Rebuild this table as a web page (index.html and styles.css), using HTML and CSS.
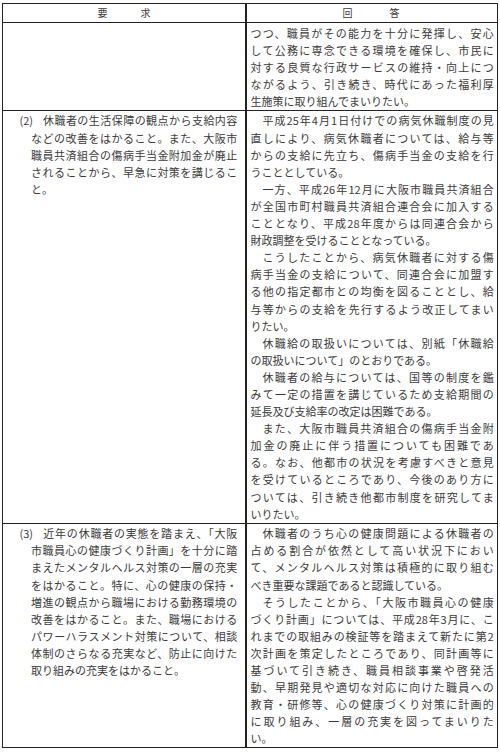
FILE: index.html
```html
<!DOCTYPE html>
<html lang="ja">
<head>
<meta charset="utf-8">
<title>要求と回答</title>
<link rel="stylesheet" href="styles.css">
</head>
<body>
<div class="sheet">
  <div class="row head">
    <div class="cell hl"><span>要</span><span>求</span></div>
    <div class="cell hr"><span>回</span><span>答</span></div>
  </div>

  <div class="row">
    <div class="cell req"></div>
    <div class="cell ans">
      <p class="para">
        <span class="l">つつ、職員がその能力を十分に発揮し、安心</span>
        <span class="l">して公務に専念できる環境を確保し、市民に</span>
        <span class="l">対する良質な行政サービスの維持・向上につ</span>
        <span class="l">ながるよう、引き続き、時代にあった福利厚</span>
        <span class="l e">生施策に取り組んでまいりたい。</span>
      </p>
    </div>
  </div>

  <div class="row">
    <div class="cell req">
      <p class="para">
        <span class="l f"><span class="n">(2)</span>休職者の生活保障の観点から支給内容</span>
        <span class="l">などの改善をはかること。また、大阪市</span>
        <span class="l">職員共済組合の傷病手当金附加金が廃止</span>
        <span class="l">されることから、早急に対策を講じるこ</span>
        <span class="l e">と。</span>
      </p>
    </div>
    <div class="cell ans">
      <p class="para">
        <span class="l i">平成25年4月1日付けでの病気休職制度の見</span>
        <span class="l">直しにより、病気休職者については、給与等</span>
        <span class="l">からの支給に先立ち、傷病手当金の支給を行</span>
        <span class="l e">うこととしている。</span>
      </p>
      <p class="para">
        <span class="l i">一方、平成26年12月に大阪市職員共済組合</span>
        <span class="l">が全国市町村職員共済組合連合会に加入する</span>
        <span class="l">こととなり、平成28年度からは同連合会から</span>
        <span class="l e">財政調整を受けることとなっている。</span>
      </p>
      <p class="para">
        <span class="l i">こうしたことから、病気休職者に対する傷</span>
        <span class="l">病手当金の支給について、同連合会に加盟す</span>
        <span class="l">る他の指定都市との均衡を図ることとし、給</span>
        <span class="l">与等からの支給を先行するよう改正してまい</span>
        <span class="l e">りたい。</span>
      </p>
      <p class="para">
        <span class="l i">休職給の取扱いについては、別紙「休職給</span>
        <span class="l e">の取扱いについて」のとおりである。</span>
      </p>
      <p class="para">
        <span class="l i">休職者の給与については、国等の制度を鑑</span>
        <span class="l">みて一定の措置を講じているため支給期間の</span>
        <span class="l e">延長及び支給率の改定は困難である。</span>
      </p>
      <p class="para">
        <span class="l i">また、大阪市職員共済組合の傷病手当金附</span>
        <span class="l">加金の廃止に伴う措置についても困難であ</span>
        <span class="l">る。なお、他都市の状況を考慮すべきと意見</span>
        <span class="l">を受けているところであり、今後のあり方に</span>
        <span class="l">ついては、引き続き他都市制度を研究してま</span>
        <span class="l e">いりたい。</span>
      </p>
    </div>
  </div>

  <div class="row">
    <div class="cell req">
      <p class="para">
        <span class="l f"><span class="n">(3)</span>近年の休職者の実態を踏まえ、「大阪</span>
        <span class="l">市職員心の健康づくり計画」を十分に踏</span>
        <span class="l">まえたメンタルヘルス対策の一層の充実</span>
        <span class="l">をはかること。特に、心の健康の保持・</span>
        <span class="l">増進の観点から職場における勤務環境の</span>
        <span class="l">改善をはかること。また、職場における</span>
        <span class="l">パワーハラスメント対策について、相談</span>
        <span class="l">体制のさらなる充実など、防止に向けた</span>
        <span class="l e">取り組みの充実をはかること。</span>
      </p>
    </div>
    <div class="cell ans">
      <p class="para">
        <span class="l i">休職者のうち心の健康問題による休職者の</span>
        <span class="l">占める割合が依然として高い状況下におい</span>
        <span class="l">て、メンタルヘルス対策は積極的に取り組む</span>
        <span class="l e">べき重要な課題であると認識している。</span>
      </p>
      <p class="para">
        <span class="l i">そうしたことから、「大阪市職員心の健康</span>
        <span class="l">づくり計画」については、平成28年3月に、こ</span>
        <span class="l">れまでの取組みの検証等を踏まえて新たに第2</span>
        <span class="l">次計画を策定したところであり、同計画等に</span>
        <span class="l">基づいて引き続き、職員相談事業や啓発活</span>
        <span class="l">動、早期発見や適切な対応に向けた職員への</span>
        <span class="l">教育・研修等、心の健康づくり対策に計画的</span>
        <span class="l">に取り組み、一層の充実を図ってまいりた</span>
        <span class="l e">い。</span>
      </p>
    </div>
  </div>
</div>
</body>
</html>
```
FILE: styles.css
```css
html, body {
  margin: 0;
  padding: 0;
  background: #ffffff;
}

body {
  font-family: "Noto Sans CJK JP", "Noto Sans", sans-serif;
  color: #3a3a3a;
  font-size: 11px;
}

.sheet {
  margin: 3px 0 0 2px;
  width: 494px;
  border: 1px solid #222222;
}

.row {
  display: grid;
  grid-template-columns: 242px 250px;
  border-top: 1px solid #222222;
}

.row.head {
  border-top: 0;
  height: 18px;
}

.cell {
  box-sizing: border-box;
  padding-top: 1.5px;
}

.cell + .cell {
  border-left: 2px solid #222222;
}

.head .cell {
  padding-top: 0;
  display: flex;
  justify-content: center;
  align-items: center;
  font-size: 10px;
  line-height: 18px;
}

.hl { gap: 33px; }
.hr { gap: 37px; }

.req {
  padding-left: 28px;
  padding-right: 7.7px;
}

.ans {
  padding-left: 3.5px;
  padding-right: 1.3px;
}

.para {
  margin: 0;
}

.l {
  display: block;
  line-height: 17.1px;
  text-align: justify;
  text-align-last: justify;
}

.l.e {
  text-align: left;
  text-align-last: left;
}

.l.i {
  text-indent: 12px;
}

.l.f {
  text-indent: -11.5px;
}

.n {
  display: inline-block;
  width: 23px;
  text-indent: 0;
}
```
